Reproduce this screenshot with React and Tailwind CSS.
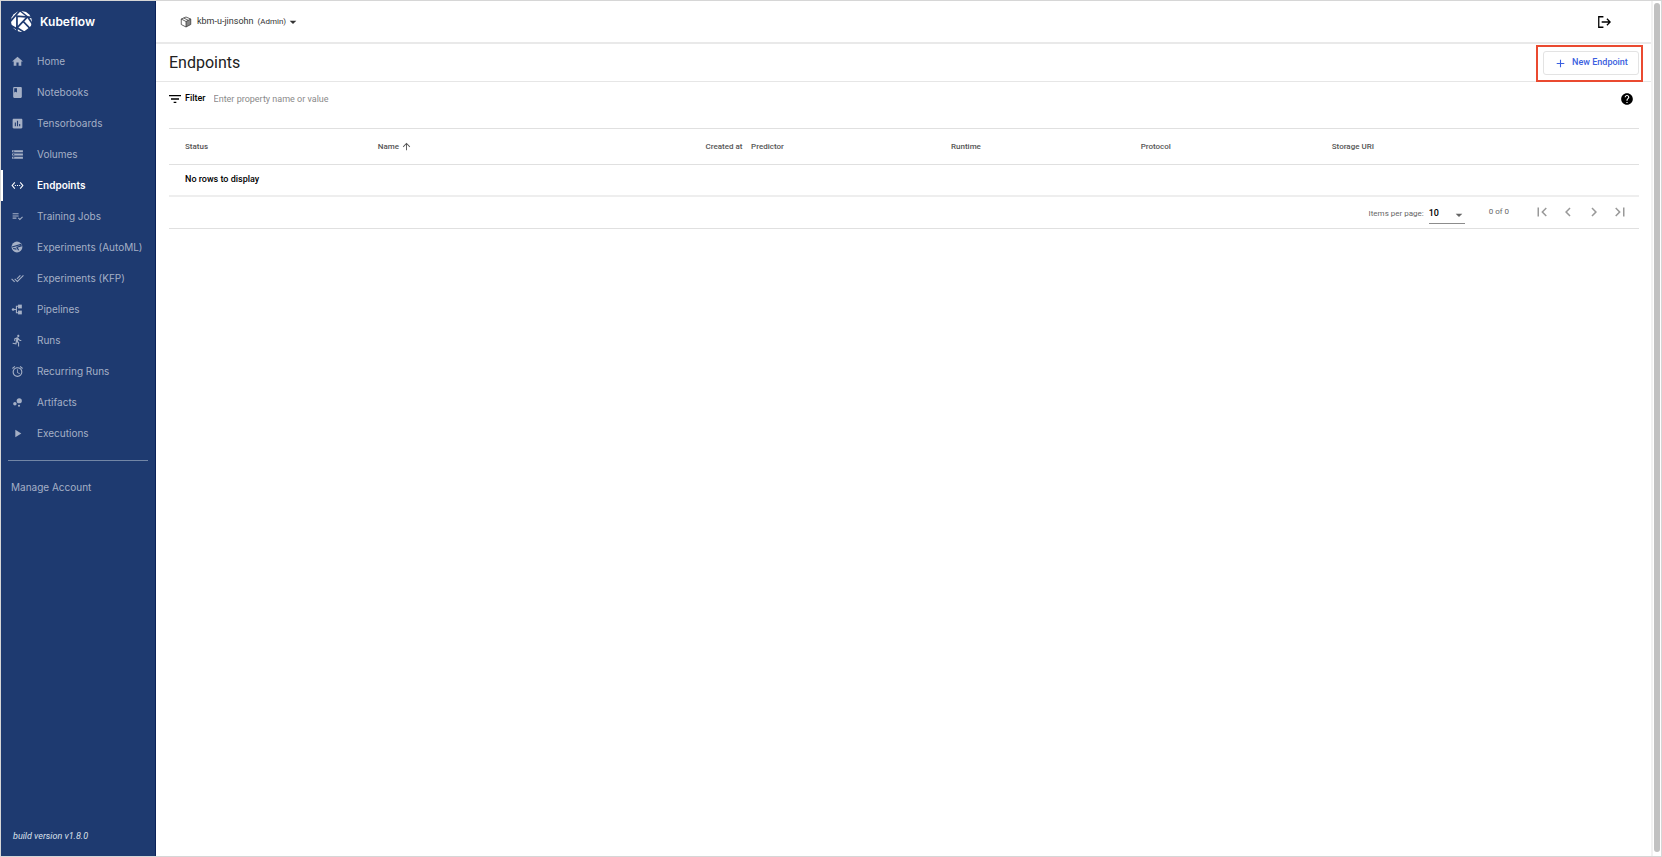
import {
  MdHome, MdBook, MdAssessment, MdStorage, MdSettingsEthernet, MdPlaylistAddCheck,
  MdDoneAll, MdDirectionsRun, MdAlarm, MdBubbleChart, MdPlayArrow, MdArrowDropDown,
  MdFilterList, MdHelp, MdArrowUpward, MdAdd, MdFirstPage, MdChevronLeft,
  MdChevronRight, MdLastPage
} from 'react-icons/md';
import { clsx } from 'clsx';

function KubeflowLogo({ className }) {
  return (
    <svg viewBox="0 0 60 60" className={className} aria-hidden="true">
      <path fill="#fff" d="M30 0 43 3 52 10 58 20 60 31 57 43 50 52 40 58 29 60 17 57 8 50 2 41 0 30 2 18 8 9 18 2Z" />
      <g stroke="#1e3a70" fill="none" strokeWidth="5">
        <path d="M-3 31 27-3" />
        <path d="M17 62V15L62 18" />
        <path d="M17 48 47 17" />
        <path d="M35 30 62 58" />
        <path d="M14 46 40 62" />
        <path d="M48 17 62 38" />
        <path d="M-2 40 18 52" />
        <path d="M24-2 48 17" strokeWidth="4" />
        <path d="M36 62 60 44" strokeWidth="4" />
      </g>
    </svg>
  );
}

function KatibIcon({ className }) {
  return (
    <svg viewBox="0 0 24 24" className={className} aria-hidden="true">
      <circle cx="11" cy="11" r="10" fill="currentColor" />
      <path d="M2 11 18 6.500 19 9 11 11.500 14 17M4 14l6 1" fill="none" stroke="#1e3a70" strokeWidth="2" />
    </svg>
  );
}

function PipelineIcon({ className }) {
  return (
    <svg viewBox="0 0 24 24" className={className} aria-hidden="true">
      <g fill="currentColor">
        <circle cx="4" cy="12" r="2.500" />
        <rect x="13" y="3" width="7" height="7" />
        <rect x="13" y="14" width="7" height="7" />
      </g>
      <path d="M4 12h6M14 6h-4v12h4" fill="none" stroke="currentColor" strokeWidth="2" />
    </svg>
  );
}

function PackageIcon({ className }) {
  return (
    <svg viewBox="0 0 24 24" className={className} aria-hidden="true">
      <path d="M12 2 21.500 6v11L12 22l-9.500-5V6zM2.500 6l9.500 5 9.500-5M12 11v11M7.500 4l9 4.500" fill="none" stroke="currentColor" strokeWidth="1.500" strokeLinejoin="round" />
      <path d="M12 11 21.500 6v11L12 22z" fill="currentColor" opacity=".6" />
    </svg>
  );
}

function LogoutIcon({ className }) {
  return (
    <svg viewBox="0 0 24 24" className={className} aria-hidden="true">
      <path d="M11 3H3v18h8M8 12h14M17 6.500l5.500 5.500-5.500 5.500" fill="none" stroke="currentColor" strokeWidth="2.200" />
    </svg>
  );
}

const navItems = [
  { name: 'Home', icon: MdHome },
  { name: 'Notebooks', icon: MdBook },
  { name: 'Tensorboards', icon: MdAssessment },
  { name: 'Volumes', icon: MdStorage },
  { name: 'Endpoints', icon: MdSettingsEthernet, active: true },
  { name: 'Training Jobs', icon: MdPlaylistAddCheck },
  { name: 'Experiments (AutoML)', icon: KatibIcon },
  { name: 'Experiments (KFP)', icon: MdDoneAll },
  { name: 'Pipelines', icon: PipelineIcon },
  { name: 'Runs', icon: MdDirectionsRun },
  { name: 'Recurring Runs', icon: MdAlarm },
  { name: 'Artifacts', icon: MdBubbleChart },
  { name: 'Executions', icon: MdPlayArrow },
];

const columns = [
  { name: 'Status', className: 'w-[14.2%] pl-4' },
  { name: 'Name', className: 'w-[22.3%]', sorted: true },
  { name: 'Created at', className: 'w-[3.1%]' },
  { name: 'Predictor', className: 'w-[13.6%]' },
  { name: 'Runtime', className: 'w-[12.9%]' },
  { name: 'Protocol', className: 'w-[13%]' },
  { name: 'Storage URI', className: '' },
];

const pagerButtons = [
  { name: 'First page', icon: MdFirstPage },
  { name: 'Previous page', icon: MdChevronLeft },
  { name: 'Next page', icon: MdChevronRight },
  { name: 'Last page', icon: MdLastPage },
];

function Sidebar() {
  return (
    <aside className="flex w-[155px] shrink-0 flex-col border-r border-[#0a2259] bg-[#1e3a70] font-[Inter,sans-serif] text-[10px] text-[#a5b0c6]">
      <div className="flex h-[41px] items-center gap-2 pl-[10px]">
        <KubeflowLogo className="h-[21px] w-[21px]" />
        <span className="text-[12px] font-semibold text-white">Kubeflow</span>
      </div>
      <nav className="flex flex-col pt-1">
        {navItems.map((item) => (
          <a
            key={item.name}
            href="#"
            className={clsx(
              'flex h-[31px] items-center gap-[13px] border-l-2 pl-2',
              item.active ? 'border-white font-semibold text-white' : 'border-transparent'
            )}
          >
            <item.icon className="h-[13px] w-[13px] shrink-0" />
            <span className="whitespace-nowrap">{item.name}</span>
          </a>
        ))}
      </nav>
      <hr className="mx-[7px] mt-[11px] border-[#7286a6]" />
      <a href="#" className="mt-[18px] pl-[10px] leading-4">Manage Account</a>
      <span className="mt-auto pb-3 pl-3 font-[Roboto,sans-serif] text-[9px] leading-4 text-[#dbe1ec] italic">build version v1.8.0</span>
    </aside>
  );
}

function Paginator() {
  return (
    <div className="flex h-8 items-center justify-end border-b border-[#e0e0e0] pr-[6px] text-[8px] text-[#666]">
      <label htmlFor="page-size" className="pt-1">Items per page:</label>
      <div className="relative ml-[5px] mt-1 h-[19px] w-9 border-b border-[#8c8c8c]">
        <select id="page-size" defaultValue="10" className="h-full w-full appearance-none bg-transparent text-[9px] font-medium text-black">
          <option>10</option>
          <option>20</option>
          <option>50</option>
        </select>
        <MdArrowDropDown className="pointer-events-none absolute top-[2px] -right-[2px] h-4 w-4" />
      </div>
      <span className="ml-6">0 of 0</span>
      <div className="ml-[20px] flex">
        {pagerButtons.map((button) => (
          <button key={button.name} aria-label={button.name} disabled className="flex h-[26px] w-[26px] items-center justify-center text-[#999]">
            <button.icon className="h-[18px] w-[18px]" />
          </button>
        ))}
      </div>
    </div>
  );
}

export default function App() {
  return (
    <div className="flex min-h-screen border border-[#d6d6d6] bg-white font-[Roboto,sans-serif]">
      <Sidebar />
      <main className="min-w-0 flex-1">
        <header className="flex h-[43px] items-center justify-between border-b-2 border-[#e9e9e9] pr-[40px] pl-6">
          <button className="flex items-center text-[#333]">
            <PackageIcon className="h-3 w-3" />
            <span className="ml-[5px] text-[9px]">kbm-u-jinsohn</span>
            <span className="ml-1 text-[8px]">(Admin)</span>
            <MdArrowDropDown className="-ml-px h-4 w-4" />
          </button>
          <button aria-label="Log out">
            <LogoutIcon className="h-[14px] w-[14px]" />
          </button>
        </header>

        <div className="flex h-[38px] items-center justify-between border-b border-[#e6e6e6] pt-px pr-3 pl-[13px]">
          <h1 className="text-[16px] text-[#212121]">Endpoints</h1>
          <div className="relative">
            <button className="flex h-6 w-24 items-center justify-center gap-[5px] rounded-[3px] border border-[#e3e3e3] text-[9px] font-medium text-[#3b5fe0]">
              <MdAdd className="h-[13px] w-[13px]" />
              New Endpoint
            </button>
            <div className="pointer-events-none absolute -top-[6px] -right-1 -bottom-[7px] -left-[7px] border-2 border-[#ea4a30]"></div>
          </div>
        </div>

        <div className="pr-3 pl-[13px]">
          <div className="flex h-[46px] items-start pt-[9px] pr-[5px]">
            <label htmlFor="filter" className="flex h-4 items-center gap-[2px] text-[9px] font-medium text-black">
              <MdFilterList className="-ml-[2px] h-4 w-4" />
              Filter
            </label>
            <input id="filter" placeholder="Enter property name or value" className="ml-2 h-4 flex-1 text-[9px] outline-none placeholder:text-[#8a8a8a]" />
            <button aria-label="Help" className="h-4">
              <MdHelp className="h-[14px] w-[14px]" />
            </button>
          </div>

          <table className="w-full table-fixed border-t border-[#e0e0e0] text-left">
            <thead>
              <tr className="h-9 border-b border-[#e0e0e0] text-[8px] text-[#555]">
                {columns.map((col) => (
                  <th key={col.name} className={clsx('font-medium whitespace-nowrap', col.className)}>
                    <span className="flex items-center gap-[2px]">
                      {col.name}
                      {col.sorted && <MdArrowUpward className="h-[11px] w-[11px]" />}
                    </span>
                  </th>
                ))}
              </tr>
            </thead>
            <tbody>
              <tr className="h-[31px] border-b-2 border-[#eee]">
                <td colSpan={7} className="pl-4 text-[9px] font-medium text-black">No rows to display</td>
              </tr>
            </tbody>
          </table>
          <Paginator />
        </div>
      </main>

      {/* Scroll track */}
      <div className="flex w-[10px] shrink-0 border-l-2 border-[#f2f2f2] px-px pt-[2px] pb-1">
        <div className="flex-1 rounded-full bg-[#c1c1c1]"></div>
      </div>
    </div>
  );
}
